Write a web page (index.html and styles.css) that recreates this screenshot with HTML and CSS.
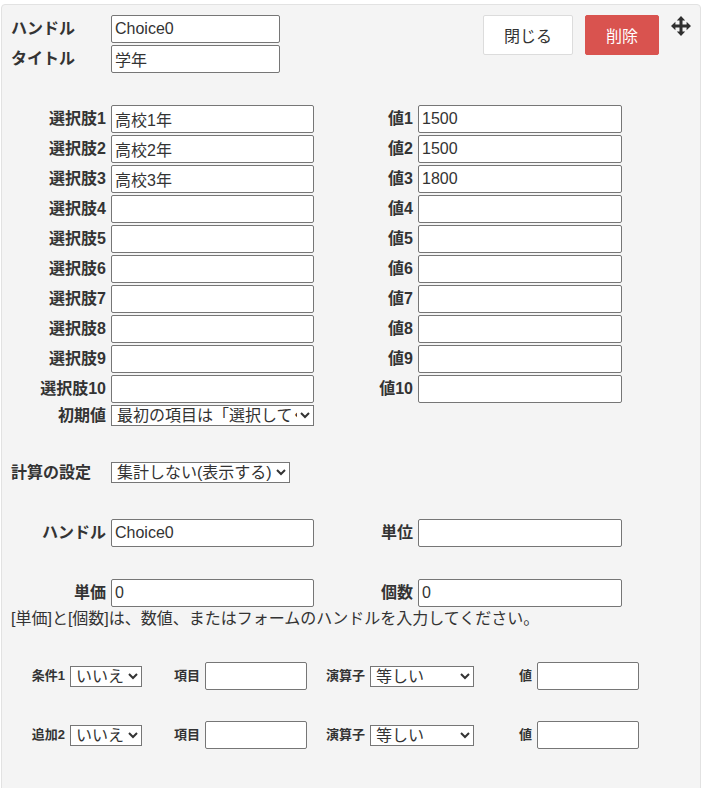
FILE: index.html
```html
<!DOCTYPE html>
<html lang="ja">
<head>
<meta charset="utf-8">
<title>Choice</title>
<link rel="stylesheet" href="styles.css">
</head>
<body>
<div class="panel">
  <div class="header">
    <div class="head-fields">
      <div class="head-row">
        <label class="head-label">ハンドル</label>
        <input class="field head-input" type="text" value="Choice0">
      </div>
      <div class="head-row">
        <label class="head-label">タイトル</label>
        <input class="field head-input" type="text" value="学年">
      </div>
    </div>
    <div class="head-actions">
      <button class="btn btn-close" type="button">閉じる</button>
      <button class="btn btn-delete" type="button">削除</button>
      <svg class="move-icon" viewBox="0 0 20 20" width="20" height="20" aria-hidden="true">
        <path d="M10 0 L14.2 4.4 H11.5 V8.5 H15.6 V5.8 L20 10 L15.6 14.2 V11.5 H11.5 V15.6 H14.2 L10 20 L5.8 15.6 H8.5 V11.5 H4.4 V14.2 L0 10 L4.4 5.8 V8.5 H8.5 V4.4 H5.8 Z" fill="#2f2f2f"/>
      </svg>
    </div>
  </div>

  <div class="options">
    <label class="lbl">選択肢1</label><input class="field" type="text" value="高校1年">
    <label class="lbl">値1</label><input class="field" type="text" value="1500">
    <label class="lbl">選択肢2</label><input class="field" type="text" value="高校2年">
    <label class="lbl">値2</label><input class="field" type="text" value="1500">
    <label class="lbl">選択肢3</label><input class="field" type="text" value="高校3年">
    <label class="lbl">値3</label><input class="field" type="text" value="1800">
    <label class="lbl">選択肢4</label><input class="field" type="text" value="">
    <label class="lbl">値4</label><input class="field" type="text" value="">
    <label class="lbl">選択肢5</label><input class="field" type="text" value="">
    <label class="lbl">値5</label><input class="field" type="text" value="">
    <label class="lbl">選択肢6</label><input class="field" type="text" value="">
    <label class="lbl">値6</label><input class="field" type="text" value="">
    <label class="lbl">選択肢7</label><input class="field" type="text" value="">
    <label class="lbl">値7</label><input class="field" type="text" value="">
    <label class="lbl">選択肢8</label><input class="field" type="text" value="">
    <label class="lbl">値8</label><input class="field" type="text" value="">
    <label class="lbl">選択肢9</label><input class="field" type="text" value="">
    <label class="lbl">値9</label><input class="field" type="text" value="">
    <label class="lbl">選択肢10</label><input class="field" type="text" value="">
    <label class="lbl">値10</label><input class="field" type="text" value="">
    <label class="lbl">初期値</label>
    <select class="sel sel-initial">
      <option>最初の項目は「選択してください」にする</option>
    </select>
  </div>

  <div class="calc-row">
    <label class="calc-label">計算の設定</label>
    <select class="sel sel-calc">
      <option>集計しない(表示する)</option>
    </select>
  </div>

  <div class="calc-grid">
    <label class="lbl">ハンドル</label><input class="field" type="text" value="Choice0">
    <label class="lbl">単位</label><input class="field" type="text" value="">
    <label class="lbl">単価</label><input class="field" type="text" value="0">
    <label class="lbl">個数</label><input class="field" type="text" value="0">
  </div>
  <p class="note">[単価]と[個数]は、数値、またはフォームのハンドルを入力してください。</p>

  <div class="cond-list">
    <div class="cond-row">
      <label class="clbl">条件1</label>
      <select class="sel sel-yes"><option>いいえ</option><option>はい</option></select>
      <label class="clbl">項目</label>
      <input class="field" type="text" value="">
      <label class="clbl">演算子</label>
      <select class="sel sel-op"><option>等しい</option></select>
      <label class="clbl">値</label>
      <input class="field" type="text" value="">
    </div>
    <div class="cond-row">
      <label class="clbl">追加2</label>
      <select class="sel sel-yes"><option>いいえ</option><option>はい</option></select>
      <label class="clbl">項目</label>
      <input class="field" type="text" value="">
      <label class="clbl">演算子</label>
      <select class="sel sel-op"><option>等しい</option></select>
      <label class="clbl">値</label>
      <input class="field" type="text" value="">
    </div>
  </div>
</div>
</body>
</html>
```

FILE: styles.css
```css
html, body {
  margin: 0;
  padding: 0;
  background: #ffffff;
}

body {
  font-family: "Liberation Sans", "Noto Sans CJK JP", sans-serif;
  font-size: 16px;
  color: #333333;
}

.panel {
  box-sizing: border-box;
  width: 700px;
  min-height: 800px;
  margin: 4px 0 0 1px;
  padding: 10px 9px 0 9px;
  background: #f4f4f4;
  border: 1px solid #e2e2e2;
  border-radius: 4px;
}

/* inputs */
.field {
  box-sizing: border-box;
  height: 28px;
  width: 100%;
  margin: 0;
  padding: 1px 3px;
  border: 1px solid #767676;
  border-radius: 2px;
  background: #ffffff;
  font-family: "Liberation Sans", "Noto Sans CJK JP", sans-serif;
  font-size: 16px;
  color: #333333;
}

.sel {
  box-sizing: border-box;
  height: 21px;
  margin: 0;
  padding: 0 0 0 1px;
  font-family: "Liberation Sans", "Noto Sans CJK JP", sans-serif;
  font-size: 16px;
  color: #333333;
  background-color: #ffffff;
}

/* header */
.header {
  display: flex;
  align-items: flex-start;
}

.head-fields {
  display: flex;
  flex-direction: column;
  gap: 2px;
}

.head-row {
  display: flex;
  align-items: center;
}

.head-label {
  width: 100px;
  font-weight: bold;
  font-size: 16px;
  line-height: 20px;
}

.head-input {
  width: 169px;
}

.head-actions {
  margin-left: auto;
  display: flex;
  align-items: flex-start;
}

.btn {
  box-sizing: border-box;
  height: 40px;
  margin: 0;
  padding: 0;
  border-radius: 2px;
  font-family: "Liberation Sans", "Noto Sans CJK JP", sans-serif;
  font-size: 16px;
  cursor: pointer;
}

.btn-close {
  width: 90px;
  background: #ffffff;
  border: 1px solid #dcdcdc;
  color: #333333;
}

.btn-delete {
  width: 74px;
  margin-left: 12px;
  background: #d9534f;
  border: 1px solid #d9534f;
  color: #ffffff;
}

.move-icon {
  display: block;
  margin: 1px 0 0 12px;
}

/* option grid */
.options {
  display: grid;
  grid-template-columns: 95px 203px 94px 204px;
  column-gap: 5px;
  row-gap: 2px;
  align-items: center;
  margin-top: 32px;
}

.lbl {
  text-align: right;
  font-weight: bold;
  font-size: 16px;
  line-height: 20px;
  white-space: nowrap;
}

.sel-initial {
  width: 203px;
}

/* calc settings */
.calc-row {
  display: flex;
  align-items: center;
  margin-top: 36px;
}

.calc-label {
  width: 100px;
  font-weight: bold;
  font-size: 16px;
  line-height: 20px;
}

.sel-calc {
  width: 179px;
}

.calc-grid {
  display: grid;
  grid-template-columns: 95px 203px 94px 204px;
  column-gap: 5px;
  row-gap: 32px;
  align-items: center;
  margin-top: 36px;
}

.note {
  margin: 0;
  font-size: 16px;
  line-height: 22px;
  padding-top: 1px;
}

/* condition rows */
.cond-list {
  display: flex;
  flex-direction: column;
  gap: 31px;
  margin-top: 32px;
}

.cond-row {
  display: grid;
  grid-template-columns: 59px 72px 63px 102px 63px 104px 63px 102px;
  align-items: center;
}

.clbl {
  text-align: right;
  padding-right: 5px;
  font-weight: bold;
  font-size: 13px;
  line-height: 18px;
  white-space: nowrap;
}

.sel-yes {
  width: 72px;
}

.sel-op {
  width: 104px;
}
```
